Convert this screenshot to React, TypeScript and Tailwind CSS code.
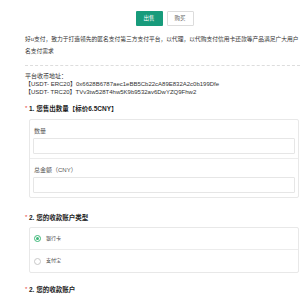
const font = { fontFamily: '"Liberation Sans", "Noto Sans CJK SC", sans-serif' };

function Title({ children }: { children: React.ReactNode }) {
  return (
    <div className="flex items-start h-[10px] leading-[10px]">
      <span className="w-[4px] text-[6px] leading-[8px] text-[#e53935]">*</span>
      <span className="text-[6.5px] font-bold text-[#222]">{children}</span>
    </div>
  );
}

function Field({ label, last }: { label: string; last?: boolean }) {
  return (
    <div className={`px-[3px] pt-[7px] ${last ? 'pb-[4px]' : 'pb-[4px] border-b border-[#ececec]'}`}>
      <div className="pl-[1px] text-[6px] leading-[8px] text-[#555]">{label}</div>
      <div className="mt-[3px] h-[16px] border border-[#e6e6e6] rounded-[1px] bg-white" />
    </div>
  );
}

function Radio({ label, checked, last }: { label: string; checked?: boolean; last?: boolean }) {
  return (
    <div className={`h-[22px] flex items-center pl-[4px] ${last ? '' : 'border-b border-[#ececec]'}`}>
      <span
        className={`w-[7px] h-[7px] rounded-full border flex items-center justify-center ${
          checked ? 'border-[#3cb878]' : 'border-[#c8c8c8]'
        }`}
      >
        {checked && <span className="w-[3px] h-[3px] rounded-full bg-[#3cb878]" />}
      </span>
      <span className="ml-[5px] text-[5px] text-[#444]">{label}</span>
    </div>
  );
}

export default function App() {
  return (
    <div className="w-[300px] h-[300px] overflow-hidden bg-white" style={font}>
      <div className="w-[275px] ml-[25px]">
        <div className="flex justify-center gap-[4px] pt-[11px] pl-[4px]">
          <button className="w-[27px] h-[15px] bg-[#179b7b] text-white text-[5.5px] rounded-[1px]">出售</button>
          <button className="w-[27px] h-[15px] bg-white border border-[#dcdcdc] text-[#666] text-[5.5px] rounded-[1px]">
            购买
          </button>
        </div>

        <div className="mt-[7px] text-[5.75px] leading-[12px] text-[#333] whitespace-nowrap">
          <div>好u支付，致力于打造领先的匿名支付第三方支付平台，以代理，以代购支付信用卡还款等产品满足广大用户</div>
          <div>名支付需求</div>
        </div>

        <div className="mt-[8px] border-t border-dashed border-[#dddddd]" />

        <div className="pt-[6px] text-[6px] leading-[8px] text-[#333] whitespace-nowrap">
          <div>平台收币地址：</div>
          <div>【USDT- ERC20】0x6628B6787aec1eBB5Cb22cA89E832A2c0b199Dfe</div>
          <div>【USDT- TRC20】TVv3tw528T4hw5K9b9532av6DwYZQ9Fhw2</div>
        </div>

        <div className="mt-[8px]">
          <Title>1. 您售出数量【标价6.5CNY】</Title>
        </div>

        <div className="mt-[5px] ml-[4px] w-[270px] border border-[#e8e8e8] rounded-[2px]">
          <Field label="数量" />
          <Field label="总金额（CNY）" last />
        </div>

        <div className="mt-[15px]">
          <Title>2. 您的收款账户类型</Title>
        </div>

        <div className="mt-[4px] ml-[4px] w-[270px] border border-[#e8e8e8] rounded-[2px]">
          <Radio label="银行卡" checked />
          <Radio label="支付宝" last />
        </div>

        <div className="mt-[12px]">
          <Title>2. 您的收款账户</Title>
        </div>
      </div>
    </div>
  );
}
